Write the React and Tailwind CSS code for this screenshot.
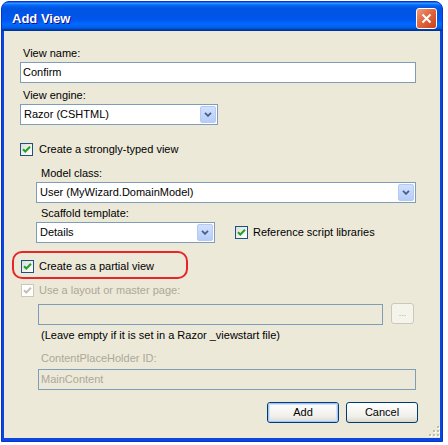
import React from 'react';

const font = "font-['Liberation_Sans',Arial,sans-serif]";

function Chevron() {
  return (
    <svg width="8" height="5" viewBox="0 0 8 5">
      <path d="M1 0.8 L4 3.8 L7 0.8" stroke="#4d6185" strokeWidth="1.9" fill="none" />
    </svg>
  );
}

function DropButton() {
  return (
    <div className="w-[16px] h-[17px] rounded-[2px] border border-[#b6c9f3] bg-[linear-gradient(to_bottom,#d1e0fd,#b6cdf9)] flex items-center justify-center">
      <Chevron />
    </div>
  );
}

function Select({ value, className = '' }) {
  return (
    <div className={`h-[21px] border border-[#7f9db9] bg-white flex items-center justify-between pl-[3px] pr-[1px] ${className}`}>
      <span>{value}</span>
      <DropButton />
    </div>
  );
}

function Checkbox({ disabled }) {
  return (
    <div
      className={`w-[13px] h-[13px] shrink-0 border flex items-center justify-center ${
        disabled ? 'border-[#cac8bb] bg-white' : 'border-[#1c5180] bg-[linear-gradient(135deg,#dcdcd7,#ffffff)]'
      }`}
    >
      <svg width="9" height="9" viewBox="0 0 9 9">
        <path
          d="M1 4.2 L3.3 6.5 L8 1.8"
          stroke={disabled ? '#c4c1b4' : '#21a121'}
          strokeWidth="2"
          fill="none"
        />
      </svg>
    </div>
  );
}

function Button({ children, primary }) {
  return (
    <div className="w-[72px] h-[21px] rounded-[3px] border border-[#003c74] bg-[linear-gradient(to_bottom,#ffffff,#f0efea_70%,#dcd8cb)] flex">
      <div
        className={`flex-1 flex items-center justify-center rounded-[2px] ${
          primary ? 'border border-[#a5c3ee] shadow-[inset_0_0_0_1px_#cfe3fc]' : ''
        }`}
      >
        {children}
      </div>
    </div>
  );
}

export default function App() {
  return (
    <div className={`w-[448px] h-[445px] bg-white pl-[1px] pt-[1px] ${font} text-[11px] leading-[13px] text-black`}>
      <div className="w-[442px] h-[441px] rounded-t-[8px] border border-[#0831d9] bg-[#0a48dd] flex flex-col overflow-hidden">
        {/* Title bar */}
        <div className="h-[29px] shrink-0 bg-[linear-gradient(to_bottom,#0058ee,#3593ff_4%,#288eff_6%,#127dff_8%,#036ffc_10%,#0262ee_14%,#0057e5_20%,#0054e3_24%,#0055eb_56%,#005bf5_66%,#026afe_76%,#0062ef_86%,#0052d6_92%,#0040ab_94%,#003092)] flex items-center justify-between pl-[10px] pr-[5px]">
          <span className="mt-[4px] text-[13px] leading-[16px] font-bold text-white [text-shadow:1px_1px_#0f1089]">
            Add View
          </span>
          <div className="w-[21px] h-[21px] mt-[4px] rounded-[3px] border border-white bg-[linear-gradient(135deg,#f19b7d,#e2683f_45%,#c8401a)] flex items-center justify-center">
            <svg width="11" height="11" viewBox="0 0 11 11">
              <path d="M1.5 1.5 L9.5 9.5 M9.5 1.5 L1.5 9.5" stroke="white" strokeWidth="2" />
            </svg>
          </div>
        </div>

        {/* Body */}
        <div className="relative flex-1 mx-[2px] mb-[3px] bg-[#ece9d8] pl-[16px] pr-[24px] pt-[16px] flex flex-col">
          <div className="ml-[3px] h-[13px]">View name:</div>
          <div className="mt-[2px] h-[21px] border border-[#7f9db9] bg-white flex items-center pl-[2px]">Confirm</div>

          <div className="mt-[6px] ml-[3px] h-[13px]">View engine:</div>
          <Select value="Razor (CSHTML)" className="mt-[2px] w-[198px]" />

          <div className="mt-[18px] h-[13px] flex items-center gap-[6px]">
            <Checkbox />
            <span>Create a strongly-typed view</span>
          </div>

          <div className="mt-[11px] ml-[21px] h-[13px]">Model class:</div>
          <Select value="User (MyWizard.DomainModel)" className="mt-[2px] ml-[16px]" />

          <div className="mt-[4px] ml-[21px] h-[13px]">Scaffold template:</div>
          <div className="mt-[2px] ml-[16px] flex items-center">
            <Select value="Details" className="w-[179px]" />
            <div className="ml-[20px] flex items-center gap-[5px]">
              <Checkbox />
              <span>Reference script libraries</span>
            </div>
          </div>

          <div className="mt-[8px] -ml-[8px] w-[176px] h-[28px] rounded-[10px] border-2 border-[#e8262a] pl-[7px] pt-[7px] flex items-start gap-[5px]">
            <Checkbox />
            <span>Create as a partial view</span>
          </div>

          <div className="mt-[5px] ml-[1px] h-[13px] flex items-center gap-[5px] text-[#aca899]">
            <Checkbox disabled />
            <span>Use a layout or master page:</span>
          </div>

          <div className="mt-[7px] ml-[18px] flex items-start">
            <div className="w-[345px] h-[21px] border border-[#7f9db9]" />
            <div className="ml-[8px] -mt-[1px] w-[23px] h-[21px] rounded-[3px] border border-[#cac8bb] bg-[#f5f4ea] flex items-center justify-center text-[#aca899] text-[9px]">
              ...
            </div>
          </div>

          <div className="mt-[4px] ml-[21px] h-[13px]">(Leave empty if it is set in a Razor _viewstart file)</div>

          <div className="mt-[10px] ml-[21px] h-[13px] text-[#aca899]">ContentPlaceHolder ID:</div>
          <div className="mt-[4px] ml-[18px] h-[21px] border border-[#7f9db9] flex items-center pl-[2px] text-[#aca899]">
            MainContent
          </div>

          <div className="mt-[12px] -mr-[2px] flex justify-end gap-[7px]">
            <Button primary>Add</Button>
            <Button>Cancel</Button>
          </div>

          {/* Resize grip */}
          <svg className="absolute right-[0px] bottom-[1px]" width="11" height="11" viewBox="0 0 11 11">
            {[[8, 0], [8, 4], [4, 4], [8, 8], [4, 8], [0, 8]].map(([x, y]) => (
              <g key={`${x}-${y}`}>
                <rect x={x + 1} y={y + 1} width="2" height="2" fill="#ffffff" />
                <rect x={x} y={y} width="2" height="2" fill="#c1bdad" />
              </g>
            ))}
          </svg>
        </div>
      </div>
    </div>
  );
}
